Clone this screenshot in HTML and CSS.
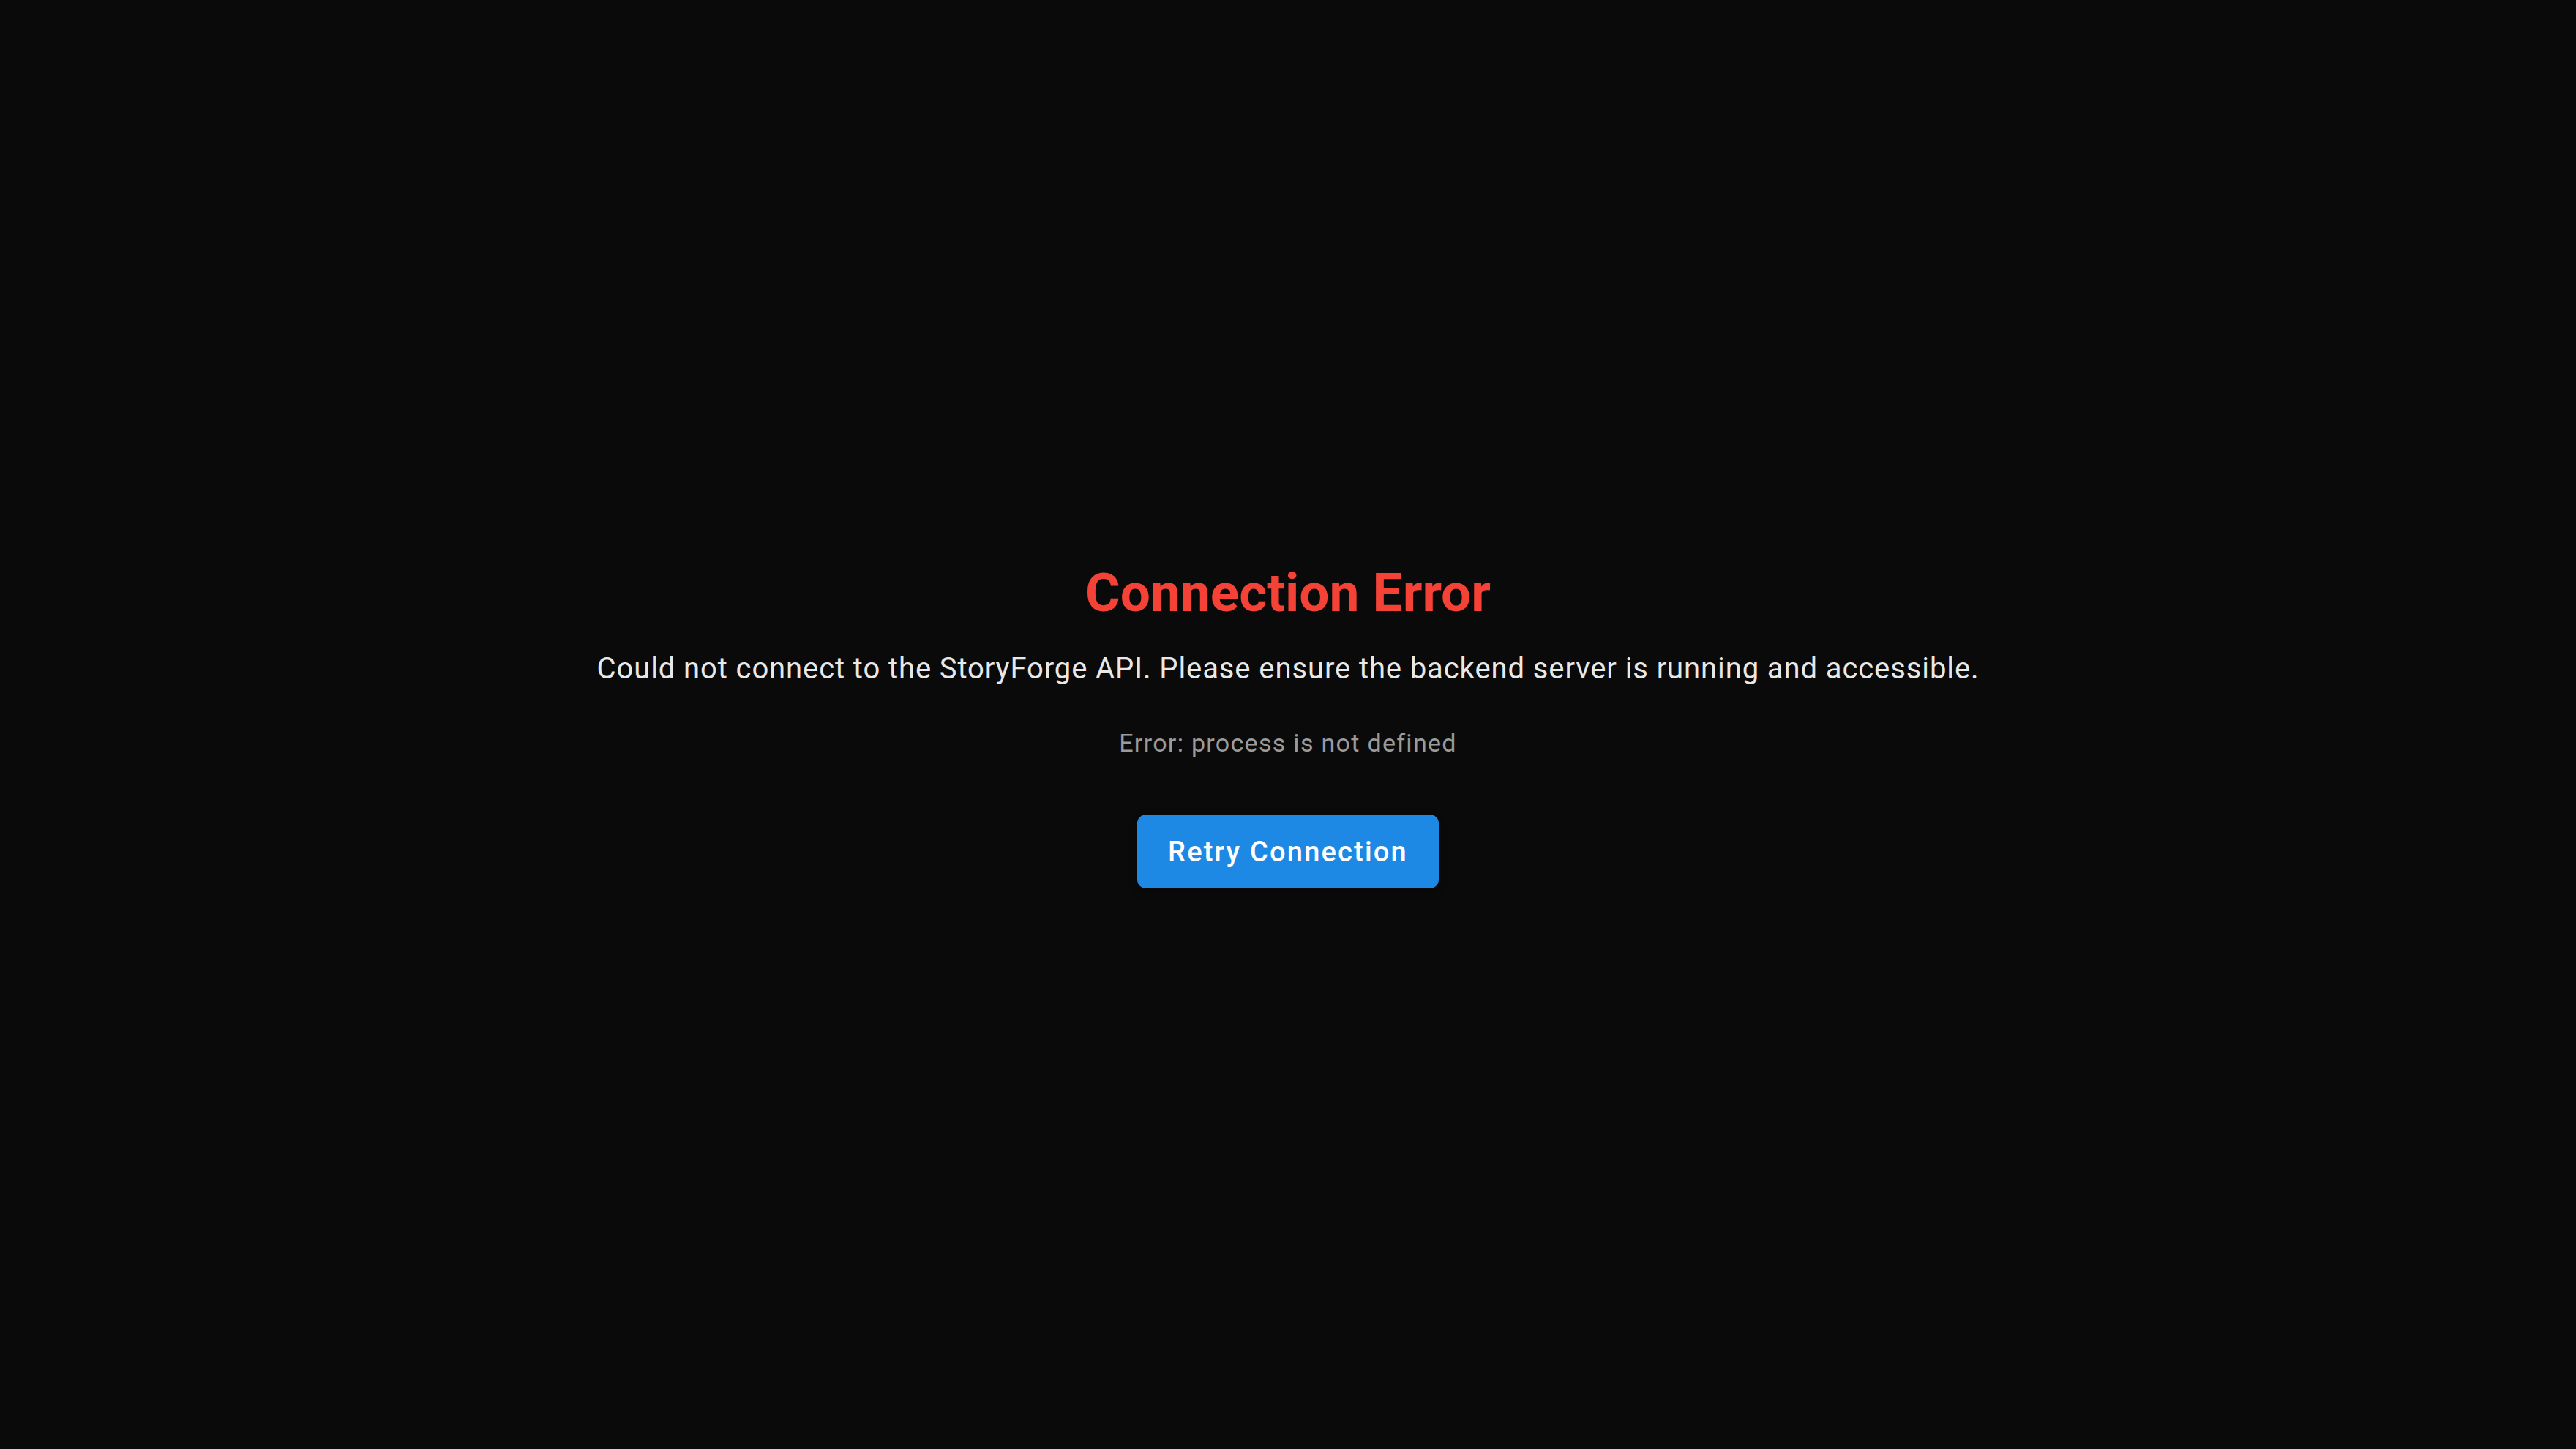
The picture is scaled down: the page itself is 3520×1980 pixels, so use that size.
FILE: index.html
```html
<!DOCTYPE html>
<html lang="en">
<head>
<meta charset="utf-8">
<title>StoryForge</title>
<link rel="stylesheet" href="styles.css">
</head>
<body>
<main class="screen">
  <div class="panel">
    <h1 class="title">Connection Error</h1>
    <p class="message">Could not connect to the StoryForge API. Please ensure the backend server is running and accessible.</p>
    <p class="detail">Error: process is not defined</p>
    <button class="retry" type="button">Retry Connection</button>
  </div>
</main>
</body>
</html>
```
FILE: styles.css
```css
html, body {
  margin: 0;
  padding: 0;
  background: #0a0a0a;
  font-family: Roboto, "Liberation Sans", sans-serif;
}
.screen {
  width: 100%;
  height: 100vh;
  display: flex;
  align-items: center;
  justify-content: center;
}
.panel {
  display: flex;
  flex-direction: column;
  align-items: center;
  text-align: center;
}
.title {
  margin: 0;
  color: #f44336;
  font-size: 73px;
  font-weight: 700;
  letter-spacing: 0;
  line-height: 88px;
}
.message {
  margin: 30px 0 0;
  color: rgba(255,255,255,0.93);
  font-size: 40px;
  font-weight: 400;
  letter-spacing: 0.9px;
  line-height: 60px;
}
.detail {
  margin: 46px 0 0;
  color: rgba(255,255,255,0.6);
  font-size: 34px;
  letter-spacing: 1.3px;
  line-height: 50px;
}
.retry {
  margin-top: 73px;
  width: 412px;
  height: 101px;
  border: 0;
  border-radius: 12px;
  background: #1e88e5;
  color: #ffffff;
  font-family: Roboto, "Liberation Sans", sans-serif;
  font-size: 38px;
  font-weight: 500;
  letter-spacing: 2.2px;
  box-shadow: 0 6px 12px rgba(0,0,0,0.3);
}
```
